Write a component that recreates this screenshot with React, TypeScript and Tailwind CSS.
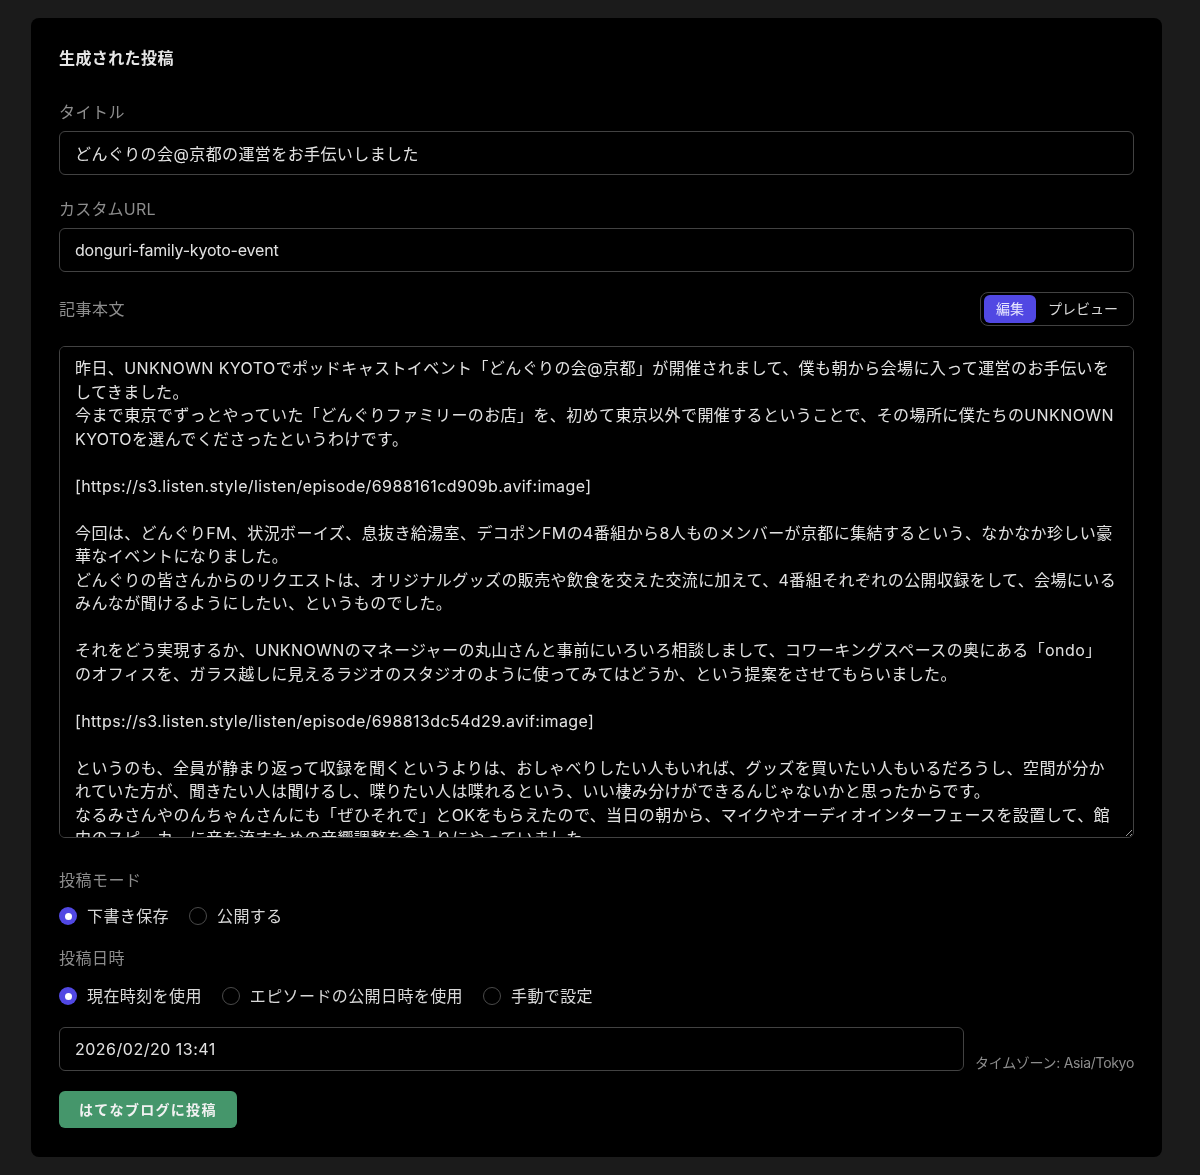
import { useState } from 'react';

const BODY = `昨日、UNKNOWN KYOTOでポッドキャストイベント「どんぐりの会@京都」が開催されまして、僕も朝から会場に入って運営のお手伝いをしてきました。
今まで東京でずっとやっていた「どんぐりファミリーのお店」を、初めて東京以外で開催するということで、その場所に僕たちのUNKNOWN KYOTOを選んでくださったというわけです。

[https://s3.listen.style/listen/episode/6988161cd909b.avif:image]

今回は、どんぐりFM、状況ボーイズ、息抜き給湯室、デコポンFMの4番組から8人ものメンバーが京都に集結するという、なかなか珍しい豪華なイベントになりました。
どんぐりの皆さんからのリクエストは、オリジナルグッズの販売や飲食を交えた交流に加えて、4番組それぞれの公開収録をして、会場にいるみんなが聞けるようにしたい、というものでした。

それをどう実現するか、UNKNOWNのマネージャーの丸山さんと事前にいろいろ相談しまして、コワーキングスペースの奥にある「ondo」のオフィスを、ガラス越しに見えるラジオのスタジオのように使ってみてはどうか、という提案をさせてもらいました。

[https://s3.listen.style/listen/episode/698813dc54d29.avif:image]

というのも、全員が静まり返って収録を聞くというよりは、おしゃべりしたい人もいれば、グッズを買いたい人もいるだろうし、空間が分かれていた方が、聞きたい人は聞けるし、喋りたい人は喋れるという、いい棲み分けができるんじゃないかと思ったからです。
なるみさんやのんちゃんさんにも「ぜひそれで」とOKをもらえたので、当日の朝から、マイクやオーディオインターフェースを設置して、館内のスピーカーに音を流すための音響調整を念入りにやっていました。

当日は……`;

function Radio({ label, checked, onClick }: { label: string; checked: boolean; onClick: () => void }) {
  return (
    <button type="button" onClick={onClick} className="flex items-center gap-[10px] h-6">
      {checked ? (
        <span className="w-[18px] h-[18px] rounded-full bg-[#5148e3] flex items-center justify-center">
          <span className="w-[7px] h-[7px] rounded-full bg-white" />
        </span>
      ) : (
        <span className="w-[18px] h-[18px] rounded-full border border-[#4a4a4a]" />
      )}
      <span className="text-base text-[#d8d8d8] tracking-[0.4px]">{label}</span>
    </button>
  );
}

export default function App() {
  const [tab, setTab] = useState<'edit' | 'preview'>('edit');
  const [mode, setMode] = useState('draft');
  const [dateMode, setDateMode] = useState('now');

  return (
    <div className="min-h-[1175px] bg-[#1b1b1b] pt-[18px] pb-[18px] font-[Inter,'Noto_Sans_CJK_JP',sans-serif]">
      <div className="ml-[31px] w-[1131px] bg-black rounded-lg px-7 pt-7 pb-[29px]">
        {/* Header */}
        <h2 className="text-base font-bold text-[#e6e6e6] leading-6 tracking-[0.4px]">生成された投稿</h2>

        {/* Title */}
        <div className="mt-[30px]">
          <label className="block text-base text-[#8d8d8d] leading-6 tracking-[0.5px]">タイトル</label>
          <input
            type="text"
            defaultValue="どんぐりの会@京都の運営をお手伝いしました"
            className="mt-[7px] w-full h-[44px] bg-black border border-[#424242] rounded-md px-[15px] text-base tracking-[0.4px] text-[#e2e2e2] focus:outline-none"
          />
        </div>

        {/* Custom URL */}
        <div className="mt-[22px]">
          <label className="block text-base text-[#8d8d8d] leading-6 tracking-[0.2px]">カスタムURL</label>
          <input
            type="text"
            defaultValue="donguri-family-kyoto-event"
            className="mt-[7px] w-full h-[44px] bg-black border border-[#424242] rounded-md px-[15px] text-base tracking-[-0.2px] text-[#e2e2e2] focus:outline-none"
          />
        </div>

        {/* Body */}
        <div className="mt-[20px]">
          <div className="flex items-center justify-between h-[34px]">
            <label className="text-base text-[#8d8d8d] leading-6 tracking-[0.5px]">記事本文</label>
            <div className="flex items-center h-[34px] border border-[#424242] rounded-lg p-[3px]">
              <button
                onClick={() => setTab('edit')}
                className={`h-[28px] px-3 rounded-md text-sm ${tab === 'edit' ? 'bg-[#5148e3] text-[#e8e8ff]' : 'text-[#d8d8d8]'}`}
              >
                編集
              </button>
              <button
                onClick={() => setTab('preview')}
                className={`h-[28px] px-3 rounded-md text-sm ${tab === 'preview' ? 'bg-[#5148e3] text-[#e8e8ff]' : 'text-[#d8d8d8]'}`}
              >
                プレビュー
              </button>
            </div>
          </div>
          <textarea
            defaultValue={BODY}
            className="mt-[20px] block w-full h-[492px] bg-black border border-[#424242] rounded-md pl-[15px] pr-[16px] py-[10px] text-base leading-[23.5px] tracking-[0.4px] text-[#e2e2e2] focus:outline-none [scrollbar-width:none]"
          />
        </div>

        {/* Post mode */}
        <div className="mt-[30px]">
          <label className="block text-base text-[#8d8d8d] leading-6 tracking-[0.5px]">投稿モード</label>
          <div className="mt-3 flex items-center gap-[20px]">
            <Radio label="下書き保存" checked={mode === 'draft'} onClick={() => setMode('draft')} />
            <Radio label="公開する" checked={mode === 'publish'} onClick={() => setMode('publish')} />
          </div>
        </div>

        {/* Post date */}
        <div className="mt-[18px]">
          <label className="block text-base text-[#8d8d8d] leading-6 tracking-[0.5px]">投稿日時</label>
          <div className="mt-[14px] flex items-center gap-[20px]">
            <Radio label="現在時刻を使用" checked={dateMode === 'now'} onClick={() => setDateMode('now')} />
            <Radio label="エピソードの公開日時を使用" checked={dateMode === 'episode'} onClick={() => setDateMode('episode')} />
            <Radio label="手動で設定" checked={dateMode === 'manual'} onClick={() => setDateMode('manual')} />
          </div>
          <div className="mt-[19px] flex items-end gap-[11px]">
            <input
              type="text"
              defaultValue="2026/02/20 13:41"
              className="flex-1 h-[44px] bg-black border border-[#424242] rounded-md px-[15px] text-base tracking-[0.5px] text-[#e2e2e2] focus:outline-none"
            />
            <span className="shrink-0 text-sm text-[#8d8d8d] leading-4 tracking-[-0.3px]">タイムゾーン: Asia/Tokyo</span>
          </div>
        </div>

        {/* Submit */}
        <button className="mt-[20px] h-[37px] px-5 rounded-md bg-[#45966b] text-sm font-bold tracking-[1.3px] text-[#f2f2f2]">
          はてなブログに投稿
        </button>
      </div>
    </div>
  );
}
